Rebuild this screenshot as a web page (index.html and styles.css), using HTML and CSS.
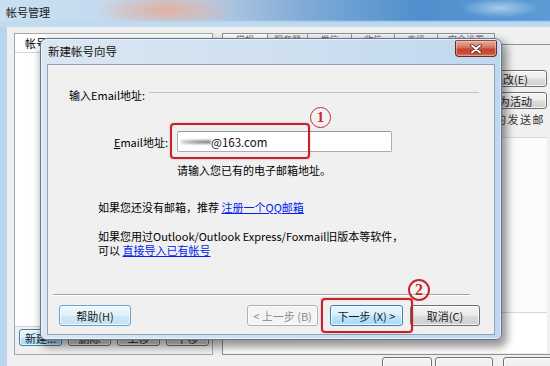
FILE: index.html
```html
<!DOCTYPE html>
<html lang="zh-CN">
<head>
<meta charset="utf-8">
<title>帐号管理</title>
<link rel="stylesheet" href="styles.css">
</head>
<body>
<div class="screen">
  <div class="mainwin">
    <div class="mw-title"><span class="mw-title-text">帐号管理</span></div>
    <div class="mw-body">
      <div class="mw-cols">
        <div class="acct-group">
          <div class="acct-list">
            <div class="acct-head">帐号</div>
          </div>
          <div class="acct-btns">
            <span class="btn hot small">新建...</span>
            <span class="btn small">删除</span>
            <span class="btn small">上移</span>
            <span class="btn small">下移</span>
          </div>
        </div>
        <div class="tabs-area">
          <div class="tabstrip">
            <span class="tab active t1">常规</span>
            <span class="tab t2">服务器</span>
            <span class="tab t3">发信</span>
            <span class="tab t4">收信</span>
            <span class="tab t5">高级</span>
            <span class="tab t6">安全设置</span>
          </div>
          <div class="tabpage">
            <div class="tp-buttons">
              <span class="btn tp-btn">更改(E)</span>
              <span class="btn tp-btn">设为活动</span>
            </div>
            <div class="tp-note">设为默认的发送邮</div>
            <div class="tp-list"><div class="tp-list-upper"></div></div>
          </div>
        </div>
      </div>
      <div class="mw-bottom">
        <span class="btn mw-btn1"></span>
        <span class="btn mw-btn2"></span>
        <span class="btn mw-btn3"></span>
      </div>
    </div>
  </div>

  <div class="dialog">
    <div class="dlg-title">新建帐号向导</div>
    <div class="dlg-close">
      <svg width="12" height="10" viewBox="0 0 12 10">
        <path d="M2 1.5 L10 8.5 M10 1.5 L2 8.5" stroke="#4a2520" stroke-width="3.6" stroke-linecap="round"/>
        <path d="M2 1.5 L10 8.5 M10 1.5 L2 8.5" stroke="#ffffff" stroke-width="2" stroke-linecap="round"/>
      </svg>
    </div>
    <div class="dlg-client">
      <div class="section-head">
        <span class="section-label">输入Email地址:</span>
        <span class="section-line"></span>
      </div>
      <div class="email-row">
        <label class="email-label"><u>E</u>mail地址:</label>
        <div class="email-input"><span class="blur-name"></span><span class="email-domain">@163.com</span></div>
      </div>
      <div class="hint">请输入您已有的电子邮箱地址。</div>
      <p class="para para1">如果您还没有邮箱，推荐 <a class="link">注册一个QQ邮箱</a></p>
      <div class="para2">
        <p class="para">如果您用过Outlook/Outlook Express/Foxmail旧版本等软件，</p>
        <p class="para">可以 <a class="link">直接导入已有帐号</a></p>
      </div>
      <div class="separator"></div>
      <div class="dlg-buttons">
        <span class="btn hot soft b-help">帮助(H)</span>
        <span class="spacer"></span>
        <span class="btn disabled b-back">&lt; 上一步 (B)</span>
        <span class="btn hot b-next">下一步 (X) &gt;</span>
        <span class="btn b-cancel">取消(C)</span>
      </div>
    </div>
  </div>

  <div class="mark box1"></div>
  <div class="num num1">1</div>
  <div class="mark box2"></div>
  <div class="num num2">2</div>
</div>
</body>
</html>
```

FILE: styles.css
```css
html, body {
  margin: 0;
  padding: 0;
  background: #f0f0f0;
}

.screen {
  width: 550px;
  height: 366px;
  position: relative;
  overflow: hidden;
  font-family: "Noto Sans CJK SC", "Noto Sans", sans-serif;
  font-size: 11px;
  color: #000;
}

/* ---------- main window ---------- */
.mainwin {
  width: 560px;
  height: 366px;
  display: flex;
  flex-direction: column;
  background: #b7d6ee;
}

.mw-title {
  height: 27px;
  flex: none;
  box-sizing: border-box;
  padding-left: 6px;
  line-height: 24px;
  background:
    linear-gradient(to bottom, rgba(255,255,255,0) 0, rgba(255,255,255,0) 20px, rgba(190,218,240,0.95) 22px, #c2dcf0 27px),
    radial-gradient(ellipse 70px 18px at 165px 10px, rgba(232,170,150,0.85), rgba(232,170,150,0)),
    radial-gradient(ellipse 40px 10px at 500px 8px, rgba(220,240,255,0.6), rgba(220,240,255,0)),
    linear-gradient(to right, #c9e0f2 0%, #c4daee 18%, #b9cde4 36%, #7eaad6 55%, #4f8fcd 75%, #5b9cd6 100%);
}

.mw-title-text {
  font-size: 11px;
  color: #1a1a1a;
}

.mw-body {
  flex: 1;
  margin-left: 7px;
  background: #f0f0f0;
  padding: 6px 0 0 7px;
  display: flex;
  flex-direction: column;
}

.mw-cols {
  height: 322px;
  flex: none;
  display: flex;
  gap: 9px;
}

.acct-group {
  width: 199px;
  box-sizing: border-box;
  border: 1px solid #a3a8ad;
  display: flex;
  flex-direction: column;
}

.acct-list {
  flex: 1;
  background: #fff;
  border-bottom: 1px solid #d0d0d0;
}

.acct-head {
  height: 18px;
  line-height: 18px;
  padding-left: 10px;
  border-bottom: 1px solid #d5d5d5;
}

.acct-btns {
  height: 27px;
  flex: none;
  display: flex;
  gap: 6px;
  padding: 2px 0 0 4px;
  box-sizing: border-box;
}

.btn.small {
  width: 43px;
  height: 17px;
}

.tabs-area {
  width: 338px;
  display: flex;
  flex-direction: column;
}

.tabstrip {
  height: 12px;
  flex: none;
  display: flex;
  margin-bottom: -1px;
}

.tab {
  box-sizing: border-box;
  height: 13px;
  border: 1px solid #8d9298;
  border-left: none;
  border-bottom: none;
  background: linear-gradient(#f4f4f4, #e2e2e2);
  font-size: 9px;
  line-height: 12px;
  color: #666;
  text-align: center;
  white-space: nowrap;
}
.tab.active {
  border-left: 1px solid #8d9298;
  background: #fff;
}
.t1 { width: 46px; }
.t2 { width: 40px; }
.t3 { width: 44px; }
.t4 { width: 43px; }
.t5 { width: 43px; }
.t6 { width: 57px; }

.tabpage {
  flex: 1;
  border: 1px solid #8d9298;
  background: #f0f0f0;
  display: flex;
  flex-direction: column;
  padding: 25px 12px 1px 0;
}

.tp-buttons {
  display: flex;
  flex-direction: column;
  align-items: flex-end;
  gap: 5px;
}

.tp-btn {
  width: 74px;
  height: 17px;
}

.tp-note {
  margin-top: 3px;
  height: 14px;
  line-height: 14px;
  padding-left: 222px;
  letter-spacing: 1.5px;
  white-space: nowrap;
  color: #333;
}

.tp-list {
  flex: 1;
  margin-top: 11px;
  background: #fff;
  border-top: 1px solid #d8d8d8;
  display: flex;
  flex-direction: column;
}

.tp-list-upper {
  height: 174px;
  background: #fbfbfb;
  border-bottom: 1px solid #d8d8d8;
}

.mw-bottom {
  display: flex;
  gap: 3px;
  padding: 2px 0 0 368px;
}
.mw-btn1 { width: 61px; height: 26px; }
.mw-btn2 { width: 70px; height: 26px; margin-right: 7px; }
.mw-btn3 { width: 70px; height: 26px; }

/* ---------- buttons ---------- */
.btn {
  box-sizing: border-box;
  display: inline-flex;
  align-items: center;
  justify-content: center;
  border: 1px solid #707070;
  border-radius: 3px;
  background: linear-gradient(#f3f3f3 0%, #ececec 48%, #dddddd 52%, #cfcfcf 100%);
  box-shadow: inset 0 0 0 1px rgba(255,255,255,0.75);
  font-size: 11px;
  color: #1b1b1b;
  white-space: nowrap;
}
.btn.hot {
  border-color: #3c7fb1;
  background: linear-gradient(#eaf6fd 0%, #d9f0fc 48%, #bee6fd 52%, #a7d9f5 100%);
}
.btn.hot.soft {
  border-color: #67a4cd;
  background: linear-gradient(#eef7fc 0%, #e3f1f9 48%, #d2e9f6 52%, #c4e1f2 100%);
}
.btn.disabled {
  border-color: #adb2b5;
  background: #f4f4f4;
  color: #8a8a8a;
}

/* ---------- dialog ---------- */
.dialog {
  position: absolute;
  left: 40px;
  top: 38px;
  width: 462px;
  height: 302px;
  box-sizing: border-box;
  border: 1px solid #5f7891;
  border-radius: 7px 7px 6px 6px;
  background: linear-gradient(to right, #dbe6f1 0%, #d0e0f0 50%, #c0d8ef 100%);
  box-shadow: inset 0 0 0 1px rgba(255,255,255,0.55), 3px 5px 9px 2px rgba(0,0,0,0.42);
  padding: 0 6px 4px 6px;
  display: flex;
  flex-direction: column;
}

.dlg-title {
  height: 25px;
  flex: none;
  line-height: 25px;
  padding-left: 1px;
  font-size: 11.5px;
  color: #111;
}

.dlg-close {
  position: absolute;
  right: 4px;
  top: 1px;
  width: 42px;
  height: 17px;
  box-sizing: border-box;
  border: 1px solid #6d2a22;
  border-top-color: #8a4a40;
  border-radius: 2px 2px 4px 4px;
  background: linear-gradient(#e9a999 0%, #d97b66 40%, #c54432 55%, #c64b36 80%, #d9765a 100%);
  box-shadow: inset 0 0 0 1px rgba(255,220,210,0.45);
  display: flex;
  align-items: center;
  justify-content: center;
}

.dlg-client {
  flex: 1;
  border: 1px solid #8ea3b9;
  background: #f0f0f0;
  display: flex;
  flex-direction: column;
}

.section-head {
  display: flex;
  align-items: center;
  gap: 4px;
  margin: 23px 15px 0 21px;
  height: 14px;
}
.section-label {
  line-height: 14px;
  white-space: nowrap;
}
.section-line {
  flex: 1;
  height: 1px;
  background: #bcc3c9;
  margin-top: -5px;
}

.email-row {
  display: flex;
  align-items: center;
  gap: 9px;
  margin-top: 29px;
  height: 21px;
}
.email-label {
  width: 120px;
  text-align: right;
  white-space: nowrap;
}
.email-input {
  width: 215px;
  height: 21px;
  box-sizing: border-box;
  border: 1px solid #abadb3;
  border-top-color: #8b9aab;
  border-radius: 2px;
  background: #fff;
  display: flex;
  align-items: center;
  padding-left: 3px;
  font-size: 11.5px;
}
.blur-name {
  width: 30px;
  height: 4px;
  background: linear-gradient(to right, #d8d8d8, #9a9a9a 60%, #8c8c8c);
  filter: blur(1px);
}
.email-domain {
  color: #111;
}

.hint {
  margin-top: 11px;
  padding-left: 129px;
  line-height: 14px;
}

.para {
  margin: 0;
  padding-left: 50px;
  height: 14px;
  line-height: 14px;
  white-space: nowrap;
}
.para1 { margin-top: 23px; }
.para2 { margin-top: 15px; display: flex; flex-direction: column; }

.link {
  color: #0022ee;
  text-decoration: underline;
}

.separator {
  margin: 37px 24px 0 5px;
  height: 1px;
  background: #a6a6a6;
  border-bottom: 1px solid #ffffff;
}

.dlg-buttons {
  display: flex;
  margin: 9px 14px 0 11px;
  height: 21px;
}
.spacer { flex: 1; }
.b-help { width: 72px; }
.b-back { width: 71px; margin-right: 12px; color: #8c8c8c; }
.b-next { width: 73px; margin-right: 7px; }
.b-cancel { width: 70px; }

/* ---------- annotations ---------- */
.mark {
  position: absolute;
  box-sizing: border-box;
  border: 2px solid #c3232b;
  border-radius: 4px;
  box-shadow: 0 0 2px rgba(170,0,0,0.35), inset 0 0 1px rgba(170,0,0,0.3);
}
.box1 { left: 170px; top: 123px; width: 140px; height: 36px; }
.box2 { left: 321px; top: 298px; width: 92px; height: 35px; }

.num {
  position: absolute;
  box-sizing: border-box;
  border-radius: 50%;
  border: 1.5px solid #c8262d;
  color: #c8262d;
  font-family: "Liberation Serif", "DejaVu Serif", serif;
  font-weight: bold;
  display: flex;
  align-items: center;
  justify-content: center;
  background: rgba(255,255,255,0.2);
}
.num1 { left: 310px; top: 107px; width: 21px; height: 21px; font-size: 15px; }
.num2 { left: 408px; top: 279px; width: 22px; height: 22px; font-size: 16px; border-width: 2px; }
```
